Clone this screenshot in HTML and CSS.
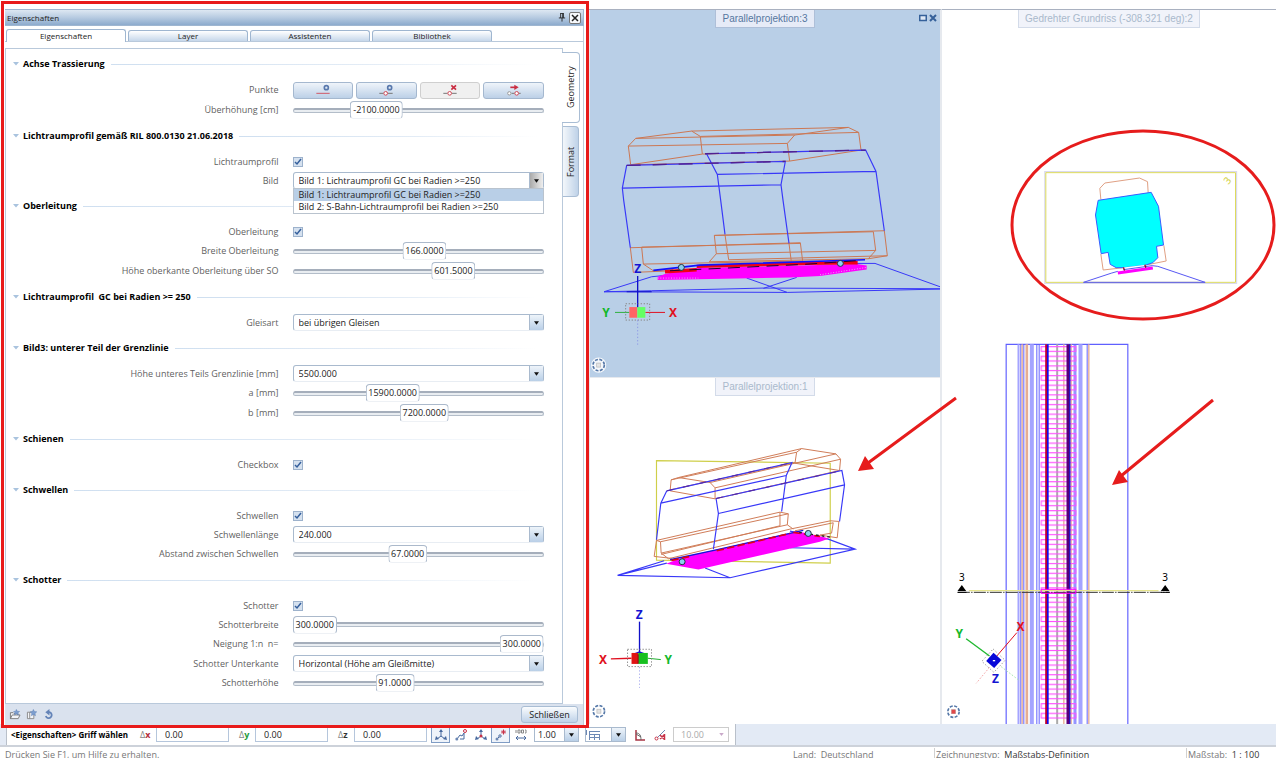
FILE: index.html
```html
<!DOCTYPE html>
<html lang="de">
<head>
<meta charset="utf-8">
<title>Eigenschaften</title>
<link rel="stylesheet" href="styles.css">
</head>
<body>
<svg class="defs" aria-hidden="true">
  <symbol id="compass" viewBox="0 0 48 48">
    <circle cx="24" cy="24" r="23" fill="#fff" fill-opacity=".85"/>
    <circle cx="24" cy="24" r="17" fill="none" stroke="#5578a8" stroke-width="5" stroke-dasharray="9 4.35"/>
    <rect x="18" y="18" width="12" height="12" fill="#e4e4e4" stroke="#b9b9b9" stroke-width="2"/>
  </symbol>
  <symbol id="tri" viewBox="0 0 6 4"><path d="M0 0h6L3 3.500z" fill="#a9c3de"/></symbol>
</svg>
<div class="app">
  <main class="workspace">
    <section class="panel" aria-label="Eigenschaften">
      <header class="titlebar">
        <h1>Eigenschaften</h1>
        <button class="pin" aria-label="Anheften"><svg viewBox="0 0 8 10"><path d="M2 .5h4M2.500 .5v5M5.500 .5v5M4.800 .5v5M.5 5.500h7M4 5.500v4" fill="none" stroke="#222"/></svg></button>
        <button class="close" aria-label="Fenster schließen"><svg viewBox="0 0 10 10"><path d="M2 2l6 6M8 2l-6 6" stroke="#222" stroke-width="1.500"/></svg></button>
      </header>
      <nav class="tabs" role="tablist">
        <button role="tab" aria-selected="true" class="tab active">Eigenschaften</button>
        <button role="tab" class="tab">Layer</button>
        <button role="tab" class="tab">Assistenten</button>
        <button role="tab" class="tab">Bibliothek</button>
      </nav>
      <div class="content">
        <form class="form">
          <section class="group">
            <h2><svg class="tri"><use href="#tri"/></svg>Achse Trassierung</h2>
            <div class="row tall"><span class="label">Punkte</span>
              <div class="buttons">
                <button type="button" aria-label="Linie hinzufügen"><svg viewBox="0 0 42 36"><path d="M1 28h40" stroke="#cf5a68" stroke-width="3"/><circle cx="31" cy="11" r="6" fill="none" stroke="#5878ad" stroke-width="5"/></svg></button>
                <button type="button" aria-label="Punkt hinzufügen"><svg viewBox="0 0 42 36"><path d="M1 28h13M26 28h15" stroke="#777" stroke-width="3"/><circle cx="20" cy="28" r="5.500" fill="#fff" stroke="#cf4a58" stroke-width="3"/><circle cx="32" cy="11" r="6" fill="none" stroke="#5878ad" stroke-width="5"/></svg></button>
                <button type="button" class="off" aria-label="Punkt löschen"><svg viewBox="0 0 42 36"><path d="M1 28h13M26 28h15" stroke="#777" stroke-width="3"/><circle cx="20" cy="28" r="5.500" fill="#fff" stroke="#cf4a58" stroke-width="3"/><path d="M25 4l14 13M39 4L25 17" stroke="#c92d42" stroke-width="5"/></svg></button>
                <button type="button" aria-label="Punkt verschieben"><svg viewBox="0 0 42 36"><path d="M14 28h9M35 28h6" stroke="#777" stroke-width="3"/><circle cx="7" cy="28" r="5" fill="#fff" stroke="#999" stroke-width="3"/><circle cx="29" cy="28" r="5.500" fill="#fff" stroke="#cf4a58" stroke-width="3"/><path d="M10 10h14" stroke="#c92d42" stroke-width="5"/><path d="M22 2l13 8-13 8z" fill="#c92d42"/></svg></button>
              </div></div>
            <div class="row tall"><label class="label" for="s1">Überhöhung [cm]</label><div class="slider"><input type="range" id="s1" value="29"><output for="s1" style="--p:29%">-2100.0000</output></div></div>
          </section>
          <section class="group">
            <h2><svg class="tri"><use href="#tri"/></svg>Lichtraumprofil gemäß RIL 800.0130 21.06.2018</h2>
            <div class="row"><label class="label" for="c1">Lichtraumprofil</label><input type="checkbox" id="c1" checked></div>
            <div class="row"><label class="label" for="d1">Bild</label>
              <div class="combo open"><select id="d1"><option>Bild 1: Lichtraumprofil GC bei Radien &gt;=250</option></select>
                <ul class="menu" role="listbox" aria-label="Bild"><li role="option" aria-selected="true">Bild 1: Lichtraumprofil GC bei Radien &gt;=250</li><li role="option">Bild 2: S-Bahn-Lichtraumprofil bei Radien &gt;=250</li></ul>
              </div></div>
          </section>
          <section class="group">
            <h2><svg class="tri"><use href="#tri"/></svg>Oberleitung</h2>
            <div class="row"><label class="label" for="c2">Oberleitung</label><input type="checkbox" id="c2" checked></div>
            <div class="row tall"><label class="label" for="s2">Breite Oberleitung</label><div class="slider"><input type="range" id="s2" value="53"><output for="s2" style="--p:53%">166.0000</output></div></div>
            <div class="row tall"><label class="label" for="s3">Höhe oberkante Oberleitung über SO</label><div class="slider"><input type="range" id="s3" value="67"><output for="s3" style="--p:67%">601.5000</output></div></div>
          </section>
          <section class="group">
            <h2><svg class="tri"><use href="#tri"/></svg>Lichtraumprofil&nbsp; GC bei Radien &gt;= 250</h2>
            <div class="row"><label class="label" for="d2">Gleisart</label><div class="combo"><select id="d2"><option>bei übrigen Gleisen</option></select></div></div>
          </section>
          <section class="group">
            <h2><svg class="tri"><use href="#tri"/></svg>Bild3: unterer Teil der Grenzlinie</h2>
            <div class="row"><label class="label" for="d3">Höhe unteres Teils Grenzlinie [mm]</label><div class="combo"><select id="d3"><option>5500.000</option></select></div></div>
            <div class="row tall"><label class="label" for="s4">a [mm]</label><div class="slider"><input type="range" id="s4" value="37"><output for="s4" style="--p:37%">15900.0000</output></div></div>
            <div class="row tall"><label class="label" for="s5">b [mm]</label><div class="slider"><input type="range" id="s5" value="53"><output for="s5" style="--p:53%">7200.0000</output></div></div>
          </section>
          <section class="group">
            <h2><svg class="tri"><use href="#tri"/></svg>Schienen</h2>
            <div class="row"><label class="label" for="c3">Checkbox</label><input type="checkbox" id="c3" checked></div>
          </section>
          <section class="group">
            <h2><svg class="tri"><use href="#tri"/></svg>Schwellen</h2>
            <div class="row"><label class="label" for="c4">Schwellen</label><input type="checkbox" id="c4" checked></div>
            <div class="row"><label class="label" for="d4">Schwellenlänge</label><div class="combo"><select id="d4"><option>240.000</option></select></div></div>
            <div class="row tall"><label class="label" for="s6">Abstand zwischen Schwellen</label><div class="slider"><input type="range" id="s6" value="45"><output for="s6" style="--p:45%">67.0000</output></div></div>
          </section>
          <section class="group">
            <h2><svg class="tri"><use href="#tri"/></svg>Schotter</h2>
            <div class="row"><label class="label" for="c5">Schotter</label><input type="checkbox" id="c5" checked></div>
            <div class="row"><label class="label" for="s7">Schotterbreite</label><div class="slider"><input type="range" id="s7" value="0"><output for="s7" style="--p:0%">300.0000</output></div></div>
            <div class="row tall"><label class="label" for="s8">Neigung 1:n&nbsp; n=</label><div class="slider"><input type="range" id="s8" value="100"><output for="s8" style="--p:100%">300.0000</output></div></div>
            <div class="row"><label class="label" for="d5">Schotter Unterkante</label><div class="combo"><select id="d5"><option>Horizontal (Höhe am Gleißmitte)</option></select></div></div>
            <div class="row tall"><label class="label" for="s9">Schotterhöhe</label><div class="slider"><input type="range" id="s9" value="39"><output for="s9" style="--p:39%">91.0000</output></div></div>
          </section>
        </form>
        <nav class="sidetabs" role="tablist">
          <button role="tab" aria-selected="true" class="sidetab active">Geometry</button>
          <button role="tab" class="sidetab">Format</button>
        </nav>
      </div>
      <footer class="panelfoot">
        <button class="icon" aria-label="Favorit laden"><svg viewBox="0 0 12 12"><path d="M1 10.500V4h3l1 1h4v1.500M1 10.500l2-4h8.500l-2 4z" fill="#f2f4f8" stroke="#777" /><path d="M7.500 .5l1 2 2.500.2-1.800 1.500.5 2.300-2.200-1.200-2 1.200.5-2.300L4.500 2.700 6.700 2.500z" fill="#7d9fd0" stroke="#5a7db5" stroke-width=".5"/></svg></button>
        <button class="icon" aria-label="Favorit speichern"><svg viewBox="0 0 12 12"><path d="M1 3.500h7v7H1zM3.500 3.500v7" fill="#f2f4f8" stroke="#888"/><path d="M7.500 .5l1.100 2.300 2.600.3-1.900 1.700.5 2.500-2.300-1.200-2.200 1.200.5-2.500L4 3.100l2.500-.3z" fill="#7d9fd0" stroke="#5a7db5" stroke-width=".5"/></svg></button>
        <button class="icon" aria-label="Zurücksetzen"><svg viewBox="0 0 12 12"><path d="M5 3.500h1.500a3.300 3.300 0 1 1-4 4.200" fill="none" stroke="#6484b8" stroke-width="2"/><path d="M6.500 0v7L2 3.500z" fill="#6484b8"/></svg></button>
        <button class="primary">Schließen</button>
      </footer>
    </section>

    <div class="stack">
      <section class="view blue" aria-label="Parallelprojektion 3">
        <h2 class="caption">Parallelprojektion:3</h2>
        <div class="winbtns">
          <button aria-label="Maximieren"><svg viewBox="0 0 8 8"><rect x=".75" y="1.500" width="6.500" height="5" fill="#dfe9f5" stroke="#35619a" stroke-width="1.500"/></svg></button>
          <button aria-label="Schließen"><svg viewBox="0 0 8 8"><path d="M1 1l6 6M7 1L1 7" stroke="#35619a" stroke-width="2"/></svg></button>
        </div>
        <svg class="drawing" viewBox="0 30 1050 1102">
          <g fill="none" stroke="#cc7854" stroke-width="3">
            <path d="M137 415L115 438L122 494L337 462L331 409L305 393L137 415L614 405L592 430L599 483L813 450L806 397L775 382L614 405M305 393L775 382M331 409L806 397M115 438L592 430M122 494L599 483M337 462L813 450"/>
            <path d="M121 743L130 817L250 812M121 743L631 728L638 783M155 741L160 792L190 812L250 808M155 741L631 730M160 792L638 783M373 706L883 692L892 767L835 776L358 785L379 761L373 706M379 761L857 751L850 695M857 751L835 776M405 704L416 779L892 767M597 730L604 785M373 706L850 695"/>
          </g>
          <g fill="none" stroke="#3838f8" stroke-width="3.500">
            <path d="M345 461L827 450L858 514L870 600L883 692M382 523L858 514M350 462L382 523L392 600L405 703M110 496L586 484L573 554L579 600L597 730M110 496L97 564L101 600L121 743M97 564L573 554"/>
            <path d="M225 826L185 830L42 875L592 877L1050 867M42 875L185 872L520 864L1050 866M800 790H855L1050 860M470 834L592 877M620 832L520 865" stroke-width="3"/>
          </g>
          <path d="M345 461L827 450M110 496L586 484" stroke="#51208f" stroke-width="4" stroke-dasharray="42 36"/>
          <path d="M203 830L225 822L320 804L800 792L830 796V808L690 828L600 832L203 840z" fill="#f0f"/>
          <path d="M203 834H325M690 824L830 802" stroke="#e9a8f4" stroke-width="3" stroke-dasharray="3 5"/>
          <path d="M225 815L320 809M320 799L650 790L803 788" stroke="#f00015" stroke-width="10"/>
          <path d="M190 811L330 795L825 779" fill="none" stroke="#1010ff" stroke-width="5"/>
          <path d="M240 812L640 793L800 782" fill="none" stroke="#200030" stroke-width="3" stroke-dasharray="36 22"/>
          <circle cx="274" cy="802" r="9" fill="#8bd0ee" stroke="#234" stroke-width="3"/><circle cx="751" cy="790" r="9" fill="#8bd0ee" stroke="#234" stroke-width="3"/>
          <path d="M143 828V922" stroke="#1010c8" stroke-width="4"/><path d="M110 875H185" stroke="#1010c8" stroke-width="3"/>
          <path d="M75 937H118" stroke="#30b040" stroke-width="3"/><path d="M166 937H225" stroke="#e01020" stroke-width="3"/>
          <path d="M118 921h24v32h-24z" fill="#ff6464"/><path d="M142 921h24v32h-24z" fill="#64ff64"/>
          <path d="M107 911h72v49h-72z" fill="none" stroke="#888" stroke-width="3" stroke-dasharray="4 5"/>
          <path d="M143 960V1040" stroke="#8f9be6" stroke-width="3" stroke-dasharray="4 6"/>
          <g class="axis"><text x="143" y="820" fill="#1414d2">Z</text><text x="48" y="950" fill="#12b82a">Y</text><text x="249" y="950" fill="#e01020">X</text></g>
          <use href="#compass" x="2" y="1071" width="48" height="48"/>
        </svg>
      </section>
      <section class="view" aria-label="Parallelprojektion 1">
        <h2 class="caption faded">Parallelprojektion:1</h2>
        <svg class="drawing" viewBox="0 -126 1050 1038">
          <path d="M199 122L721 130V430L199 421z" fill="none" stroke="#cfcf4a" stroke-width="3.500"/>
          <g fill="none" stroke="#d07c58" stroke-width="3">
            <path d="M240 213L243 180L265 173L635 86L738 102L752 118L749 152L375 237L240 213M243 180L620 97L635 86M620 97L615 130L749 152M265 173L360 188L375 204V237M360 188L738 102M375 204L752 118M240 210L615 128"/>
            <path d="M192 410L199 362L570 277L595 282L592 315L610 328M199 362L211 366L595 282M211 366L213 400L235 417L600 328M192 410L245 416M213 400L592 315M570 277V318L213 404M600 328L722 303L747 305L742 354L690 346M615 333L730 309L725 340L690 346"/>
          </g>
          <g fill="none" stroke="#3838f8" stroke-width="3.500">
            <path d="M230 213L606 128L589 167L575 275M212 250L589 167M230 213L212 250L199 360M378 236L756 152L764 195L749 305M385 281L764 195M378 236L385 281L370 388"/>
            <path d="M230 430L82 467L222 423M82 467L420 474L796 388L715 358L600 334M345 445L420 474M600 384L796 388"/>
          </g>
          <path d="M230 213L606 128M378 236L756 152" stroke="#5a2a9c" stroke-width="3" stroke-dasharray="20 30"/>
          <path d="M228 432L285 410L600 340L620 334L718 356L690 366L345 445L325 449z" fill="#f0f"/>
          <path d="M240 420L375 391L640 332" fill="none" stroke="#1414d8" stroke-width="4"/>
          <path d="M244 422L300 410M380 393L600 341M610 338L690 350" stroke="#e00018" stroke-width="5" stroke-dasharray="22 10"/>
          <path d="M628 338L720 352" stroke="#222" stroke-width="4" stroke-dasharray="8 9"/>
          <circle cx="276" cy="426" r="9" fill="#8bd0ee" stroke="#234" stroke-width="3"/><circle cx="655" cy="341" r="9" fill="#8bd0ee" stroke="#234" stroke-width="3"/>
          <path d="M148 606V700" stroke="#1010c8" stroke-width="4"/><path d="M62 718L124 716" stroke="#e01020" stroke-width="4"/><path d="M173 716L212 720" stroke="#20b030" stroke-width="3"/>
          <path d="M134 700l14-5 14 5z" fill="#1414d2"/><path d="M124 700h20v33h-20z" fill="#e01414"/><path d="M144 700h29v33h-29z" fill="#18c020"/><path d="M144 704v28" stroke="#801010" stroke-width="3"/>
          <path d="M112 689h72v52h-72z" fill="none" stroke="#888" stroke-width="3" stroke-dasharray="4 5"/>
          <path d="M148 742V805" stroke="#b0b4f0" stroke-width="3" stroke-dasharray="4 6"/>
          <g class="axis"><text x="147" y="598" fill="#1414d2">Z</text><text x="38" y="733" fill="#e01020">X</text><text x="234" y="734" fill="#12b82a">Y</text></g>
          <use href="#compass" x="2" y="851" width="48" height="48"/>
        </svg>
      </section>
    </div>

    <section class="view plan" aria-label="Gedrehter Grundriss 2">
      <h2 class="caption faded">Gedrehter Grundriss (-308.321 deg):2</h2>
      <svg class="drawing" viewBox="9 30 999 2142">
        <defs><pattern id="sleepers" patternUnits="userSpaceOnUse" x="303" y="1038" width="108" height="28.950"><rect x="2" y="2" width="103" height="14" fill="none" stroke="#ff50ff" stroke-width="3.500"/></pattern></defs>
        <path d="M316 515H891V850H316z" fill="none" stroke="#dadaee" stroke-width="4"/>
        <path d="M319 518H888V847H319z" fill="none" stroke="#dddb5c" stroke-width="3"/>
        <text x="863" y="552" class="mark" fill="#d2d040" transform="rotate(-50 863 541)">3</text>
        <path d="M484 598L481 565L496 549L600 534L624 545L626 578M484 762L491 810L552 803M673 736L680 783L620 795" fill="none" stroke="#e0a084" stroke-width="3"/>
        <path d="M476 601L635 577L657 619L672 735L651 739L655 773L640 788L616 796L555 803H530L512 793L506 757L485 761L468 645z" fill="#0ff" stroke="#3a5cff" stroke-width="3"/>
        <path d="M552 805L620 797" stroke="#fff" stroke-width="5"/>
        <path d="M535 814L517 819L432 847H797L655 799L638 797L552 809" fill="none" stroke="#5858f4" stroke-width="3"/>
        <path d="M535 819L640 804" stroke="#f0f" stroke-width="9"/><path d="M552 802l3 10M616 794l3 9" stroke="#900020" stroke-width="4"/>
        <path d="M200 2172V1033H565V2172" fill="none" stroke="#6060ff" stroke-width="3.500"/>
        <g fill="none" stroke="#a4a4ff">
          <path d="M237 1033V2172" stroke-width="6"/><path d="M277 1033V2172M423 1033V2172" stroke-width="12"/>
          <path d="M244 1033V2172M253 1033V2172M292 1033V2172M299 1033V2172M404 1033V2172M409 1033V2172M443 1033V2172" stroke="#6060ff" stroke-width="3"/>
        </g>
        <g fill="none" stroke="#e6ad92"><path d="M248 1033V2172M373 1033V2172M395 1033V2172M448 1033V2172" stroke-width="4"/><path d="M262 1033V2172" stroke-width="8"/></g>
        <path d="M353 1033V2172" stroke="#aaa" stroke-width="6"/>
        <path d="M303 1038h108v1120H303z" fill="url(#sleepers)"/>
        <path d="M320 1033V2172" stroke="#c00030" stroke-width="6"/><path d="M325 1033V2172" stroke="#0c0cf0" stroke-width="5"/>
        <path d="M386 1033V2172" stroke="#5a0078" stroke-width="10"/><path d="M391 1033V2172" stroke="#1a10d0" stroke-width="4"/>
        <path d="M88 1772H657" stroke="#e6e48c" stroke-width="4"/><path d="M55 1777H690" stroke="#333" stroke-width="3" stroke-dasharray="36 4 4 4"/>
        <path d="M305 1768h104v12H305z" fill="none" stroke="#f0f" stroke-width="3"/>
        <path d="M67 1755l13 18H54zM677 1755l13 18h-26z" fill="#000"/><path d="M54 1777h27M664 1777h27" stroke="#000" stroke-width="3"/>
        <text x="67" y="1743" class="mark">3</text><text x="677" y="1743" class="mark">3</text>
        <path d="M80 1916L150 1968" stroke="#20b830" stroke-width="4"/><path d="M172 1968L232 1898" stroke="#e01020" stroke-width="3"/>
        <path d="M150 2002L110 2050" stroke="#f4aaaa" stroke-width="3" stroke-dasharray="5 5"/><path d="M185 2000L240 2042" stroke="#a8e8b0" stroke-width="3" stroke-dasharray="5 5"/>
        <path d="M161 1947l36 34-34 36-36-33z" fill="none" stroke="#999" stroke-width="3" stroke-dasharray="4 6"/>
        <path d="M162 1958l24 22-22 24-24-21z" fill="#0808d8"/><path d="M160 1982h7" stroke="#fff" stroke-width="4"/>
        <g class="axis"><text x="59" y="1914" fill="#12b82a">Y</text><text x="243" y="1892" fill="#e01020">X</text><text x="168" y="2049" fill="#1414d2">Z</text></g>
        <use href="#compass" x="18" y="2111" width="48" height="48"/><path d="M36 2129h12v12H36z" fill="#e04848"/>
      </svg>
    </section>

    <svg class="marks" viewBox="0 0 1276 724" aria-hidden="true">
      <g fill="none" stroke="#e61c1c" stroke-width="3"><ellipse cx="1143" cy="225" rx="131" ry="94"/><path d="M956 398L868 463M1213 400L1121 476"/></g>
      <path d="M858 471L865 456L874 469zM1112 485L1119 470L1128 482z" fill="#e61c1c"/>
    </svg>
  </main>

  <div class="toolbar">
    <form class="inputs">
      <strong>&lt;Eigenschaften&gt; Griff wählen</strong>
      <label for="dx" class="delta">Δ<b class="x">x</b></label><input id="dx" value="0.00">
      <label for="dy" class="delta">Δ<b class="y">y</b></label><input id="dy" value="0.00">
      <label for="dz" class="delta">Δ<b>z</b></label><input id="dz" value="0.00">
      <div class="tools">
        <button type="button" class="on" aria-label="Global"><svg viewBox="0 0 12 12"><path d="M6 2v5L2 10M6 7l4 3" fill="none" stroke="#46689e"/><path d="M6 0l2 3H4zM0 11l1-4 3 3zM12 11l-1-4-3 3z" fill="#46689e"/></svg></button>
        <button type="button" aria-label="Relativ"><svg viewBox="0 0 12 12"><path d="M2 10l3-4 2 1 2-3v6H5" fill="none" stroke="#46689e"/><circle cx="10" cy="2" r="1.500" fill="#fff" stroke="#c83248"/><circle cx="1.800" cy="10" r="1.500" fill="#6c88b4"/></svg></button>
        <button type="button" aria-label="Lokal"><svg viewBox="0 0 12 12"><path d="M6 2v5L2 10M6 7l4 3" fill="none" stroke="#46689e"/><path d="M6 0l2 3H4zM0 11l1-4 3 3zM12 11l-1-4-3 3z" fill="#46689e"/><circle cx="6" cy="7" r="1.500" fill="#c83248"/></svg></button>
        <button type="button" class="on" aria-label="Fangpunkt"><svg viewBox="0 0 12 12"><path d="M2 10l4-4" stroke="#46689e"/><circle cx="2" cy="10" r="1.500" fill="#6c88b4"/><circle cx="5" cy="7" r="1.200" fill="#fff" stroke="#46689e"/><path d="M6 3h5M8.500 .5v5M7 1.500l3 3M10 1.500l-3 3" stroke="#c83248"/></svg></button>
        <button type="button" aria-label="Raster"><svg viewBox="0 0 12 12"><path d="M1 1v3M3 1h2v3H3zM6.500 1h2v3h-2zM10 1h1v3h-1" fill="none" stroke="#888"/><path d="M1 9h10M3 7L1 9l2 2M9 7l2 2-2 2" fill="none" stroke="#46689e"/></svg></button>
      </div>
      <div class="combo mini"><select aria-label="Faktor"><option>1.00</option></select></div>
      <div class="combo mini pic"><svg viewBox="0 0 14 12"><path d="M.5 1v5M3 2.500h11M3 5.500h11M3.500 2v9M13.500 5v6M8.500 6v5M4 8.500h9" fill="none" stroke="#6c88b4"/></svg><select aria-label="Bemaßung"><option></option></select></div>
      <div class="tools">
        <button type="button" aria-label="Winkel"><svg viewBox="0 0 12 12"><path d="M2 1v10h9" fill="none" stroke="#a83444" stroke-width="1.500"/><path d="M2 4c4 0 5 3 5 7M2 5l5 3" fill="none" stroke="#666"/></svg></button>
        <button type="button" aria-label="Winkelfang"><svg viewBox="0 0 12 12"><path d="M2 10L11 1" stroke="#6c88b4"/><circle cx="2.500" cy="9.500" r="1.500" fill="#fff" stroke="#c83248"/><path d="M6 6l4 4M10 6l-4 4M10.500 5v6" stroke="#c83248" stroke-width="1.500"/></svg></button>
      </div>
      <div class="combo mini disabled"><select aria-label="Winkelschritt" disabled><option>10.00</option></select></div>
    </form>
  </div>
  <footer class="status">
    <span class="hint">Drücken Sie F1, um Hilfe zu erhalten.</span>
    <span class="cell land">Land:&nbsp; Deutschland</span>
    <span class="cell type">Zeichnungstyp:&nbsp; <b>Maßstabs-Definition</b></span>
    <span class="cell scale">Maßstab:&nbsp; <b>1 : 100</b></span>
  </footer>
</div>
</body>
</html>
```
FILE: styles.css
```css
* { box-sizing: border-box; }
body { margin: 0; background: #fff; color: #222; font: 9px/14px "Open Sans", "Noto Sans", sans-serif; }
button, input, select { font: inherit; color: inherit; margin: 0; padding: 0; }
button { border: 0; background: none; }
button svg { display: block; }
h1, h2, ul { margin: 0; padding: 0; font-size: inherit; font-weight: inherit; list-style: none; }
.defs { position: absolute; width: 0; height: 0; }
.app { display: flex; flex-direction: column; height: 100vh; overflow: hidden; }

.workspace { position: relative; flex: 1; min-height: 0; display: grid; grid-template-columns: 589fr 353fr 334fr; grid-template-rows: minmax(0, 1fr); }
.panel { position: relative; z-index: 2; display: flex; flex-direction: column; margin: 1px 0 -4px 1px; padding: 5px 2px 0 1px; border: 3px solid #e81a1a; background: #fff; }
.titlebar { display: flex; align-items: center; gap: 3px; height: 17px; padding: 0 2px; background: linear-gradient(#dde7f2, #b7cbe1 50%, #8dabcd); border: 1px solid #9fb6d0; border-left: 0; font-size: 8px; }
.titlebar h1 { flex: 1; }
.pin svg { width: 8px; height: 9px; }
.close { width: 12px; height: 12px; border: 1px solid #777; border-radius: 2px; background: #f6f8fb; }
.tabs { display: flex; align-items: flex-end; gap: 2px; height: 16px; padding-left: 1px; border-right: 1px solid #c2ccd9; border-bottom: 1px solid #b9c9db; }
.tab { flex: 0 0 120px; height: 11px; line-height: 10px; font-size: 8px; border: 1px solid #9fb6d0; border-bottom: 0; border-radius: 3px 3px 0 0; background: linear-gradient(#fff, #c6d7ea); }
.tab.active { height: 13px; margin-bottom: -1px; background: #fff; }

.content { flex: 1; min-height: 0; display: flex; padding-top: 6px; border-right: 1px solid #c2ccd9; }
.form { flex: 1; min-width: 0; padding-right: 18px; border: 1px solid #b9c9db; }
.group { padding-top: 9px; }
.group:first-child { padding-top: 8px; }
.group h2 { display: flex; align-items: center; gap: 4px; height: 14px; margin: 0 7px 9px; color: #000; font-weight: 700; }
.group h2::after { content: ""; flex: 1; height: 1px; margin-left: 2px; background: linear-gradient(90deg, #cfdff0, #e3ecf6 60%, #fff); }
.tri { width: 6px; height: 4px; }
.row { display: grid; grid-template-columns: minmax(0, 272fr) minmax(0, 251fr); gap: 14px; align-items: center; height: 19px; }
.row.tall { height: 20px; }
.label { text-align: right; color: #5f5f5f; white-space: nowrap; }
.buttons { display: grid; grid-template-columns: repeat(4, 1fr); gap: 3px; }
.buttons button { display: flex; justify-content: center; align-items: center; height: 17px; border: 1px solid #a5b8cf; border-radius: 3px; background: linear-gradient(#eff4fa, #bcd0e7); }
.buttons .off { background: #f0f0f0; border-color: #cfcfcf; }
.buttons svg { width: 14px; height: 12px; }
.slider { position: relative; display: flex; align-items: center; height: 18px; }
.slider input { appearance: none; width: 100%; height: 5px; border: 1px solid #b3bdc9; border-top: 2px solid #a5aebb; border-radius: 3px; background: #e9edf1; }
.slider input::-webkit-slider-thumb { appearance: none; width: 40px; height: 5px; background: transparent; }
.slider output { position: absolute; top: 0; left: var(--p); transform: translateX(calc(-1 * var(--p))); height: 18px; padding: 0 2px; line-height: 16px; border: 1px solid #abb9cb; border-bottom-color: #eef1f5; border-radius: 4px; background: #fff; pointer-events: none; }
input[type="checkbox"] { appearance: none; width: 10px; height: 10px; border: 1px solid #9db2cc; background: #d5e1ef url("data:image/svg+xml,%3Csvg xmlns='http://www.w3.org/2000/svg' viewBox='0 0 8 8'%3E%3Cpath d='M1 4l2 2 4-5' fill='none' stroke='%23355f9c' stroke-width='1.500'/%3E%3C/svg%3E"); }
.combo { position: relative; display: flex; height: 17px; border: 1px solid #a9bace; border-bottom-color: #e8edf3; border-radius: 3px; background: #fff; }
.combo select { appearance: none; flex: 1; min-width: 0; height: 100%; padding: 0 14px 0 5px; border: 0; background: none; }
.combo::after { content: ""; position: absolute; top: 0; right: 0; bottom: 0; width: 13px; border-left: 1px solid #a9bace; pointer-events: none; background: url("data:image/svg+xml,%3Csvg xmlns='http://www.w3.org/2000/svg' viewBox='0 0 6 4'%3E%3Cpath d='M0 0h6L3 4z' fill='%23111'/%3E%3C/svg%3E") center / 5px 4px no-repeat, linear-gradient(#eef4fa, #b9cfe7); }
.open::after { background: url("data:image/svg+xml,%3Csvg xmlns='http://www.w3.org/2000/svg' viewBox='0 0 6 4'%3E%3Cpath d='M0 0h6L3 4z' fill='%23111'/%3E%3C/svg%3E") center / 5px 4px no-repeat, linear-gradient(90deg, #aaa, #eee); }
.menu { position: absolute; z-index: 3; top: 15px; left: -1px; right: -1px; border: 1px solid #b9c3ce; background: #fff; }
.menu li { height: 12px; padding-left: 5px; line-height: 12px; }
.menu li[aria-selected] { background: #b9cfe7; }

.sidetabs { display: flex; flex-direction: column; gap: 3px; width: 20px; padding-top: 4px; }
.sidetab { width: 16px; height: 71px; writing-mode: vertical-rl; transform: rotate(180deg); border: 1px solid #a9bdd4; border-right: 0; border-radius: 4px 0 0 4px; background: linear-gradient(90deg, #bfd2e8, #f3f7fb); text-align: center; }
.sidetab.active { width: 18px; margin-left: -1px; background: #fff; }
.panelfoot { display: flex; align-items: center; gap: 5px; height: 21px; padding: 0 5px 0 4px; background: #dae2ee; border-right: 1px solid #c2ccd9; }
.icon svg { width: 12px; height: 11px; }
.primary { margin-left: auto; width: 57px; height: 17px; border: 1px solid #a9bdd4; border-radius: 3px; background: linear-gradient(#fafcfe, #bfd2e8); }

.stack { display: grid; grid-template-rows: 368fr 346fr; gap: 1px; margin-top: 9px; padding-left: 1px; border-top: 1px solid #a9b1c0; border-right: 2px solid #e6e9ee; background: #e6e9ee; min-height: 0; }
.view { position: relative; min-height: 0; display: flex; flex-direction: column; align-items: center; background: #fff; }
.view.blue { background: #b9cfe7; }
.plan { margin-top: 9px; border-top: 1px solid #a9b1c0; }
.drawing { position: absolute; inset: 0; width: 100%; height: 100%; }
.caption { z-index: 1; height: 18px; padding: 0 6px; border: 1px solid #aebfd8; border-top: 0; background: #e6ebf7; color: #56779f; font: 10px/17px "Liberation Sans", Arial, sans-serif; white-space: nowrap; }
.caption.faded { border-color: #d3dbe9; background: #f1f3fa; color: #a9b9cc; }
.winbtns { position: absolute; z-index: 1; top: 4px; right: 3px; display: flex; gap: 2px; }
.winbtns svg { width: 8px; height: 8px; }
.axis { font: 700 36px "Noto Sans", sans-serif; text-anchor: middle; }
.mark { font: 30px "Noto Sans", sans-serif; text-anchor: middle; }
.marks { position: absolute; inset: 0; width: 100%; height: 100%; pointer-events: none; }

.toolbar { flex: none; height: 23px; background: #e3eaf5; border-bottom: 2px solid #cdd2da; }
.inputs { display: flex; align-items: center; width: fit-content; height: 21px; margin-left: 6px; padding: 0 6px 0 4px; border: solid #b9c0ca; border-width: 0 1px; background: #fff; }
.inputs strong { color: #000; font-size: 8px; width: 122px; white-space: nowrap; }
.delta { width: 23px; padding-left: 7px; color: #888; }
.delta b { color: #333; }
.delta .x { color: #b5303c; }
.delta .y { color: #1c9a3c; }
.inputs input { width: 73px; height: 15px; padding: 0 8px; border: 1px solid #b5c6dc; background: #fff; }
.inputs input + .delta { margin-left: 3px; }
.tools { display: flex; gap: 1px; margin: 0 4px; }
.tools button { width: 19px; height: 17px; display: flex; align-items: center; justify-content: center; }
.tools svg { width: 12px; height: 12px; }
.tools .on { border: 1px solid #7f9cc4; background: #eef3fa; }
.mini { width: 45px; height: 15px; border-radius: 0; border-bottom-color: #a9bace; }
.mini select { padding: 0 13px 0 3px; }
.pic { width: 41px; margin-left: 6px; align-items: center; }
.pic svg { width: 14px; height: 12px; }
.disabled { width: 56px; border-color: #ccc; color: #aaa; }
.disabled select { padding-left: 7px; opacity: 1; }
.disabled::after { border: 0; background: url("data:image/svg+xml,%3Csvg xmlns='http://www.w3.org/2000/svg' viewBox='0 0 6 4'%3E%3Cpath d='M0 0h6L3 4z' fill='%23c9a9c9'/%3E%3C/svg%3E") center / 5px 3px no-repeat; }

.status { flex: none; display: grid; grid-template-columns: 793fr 141fr 252fr 90fr; height: 11px; padding-top: 1px; overflow: hidden; color: #777; white-space: nowrap; }
.hint { padding-left: 5px; }
.type, .scale { border-left: 1px solid #d0d0d0; padding-left: 1px; }
.status b { color: #333; font-weight: 400; }
```
